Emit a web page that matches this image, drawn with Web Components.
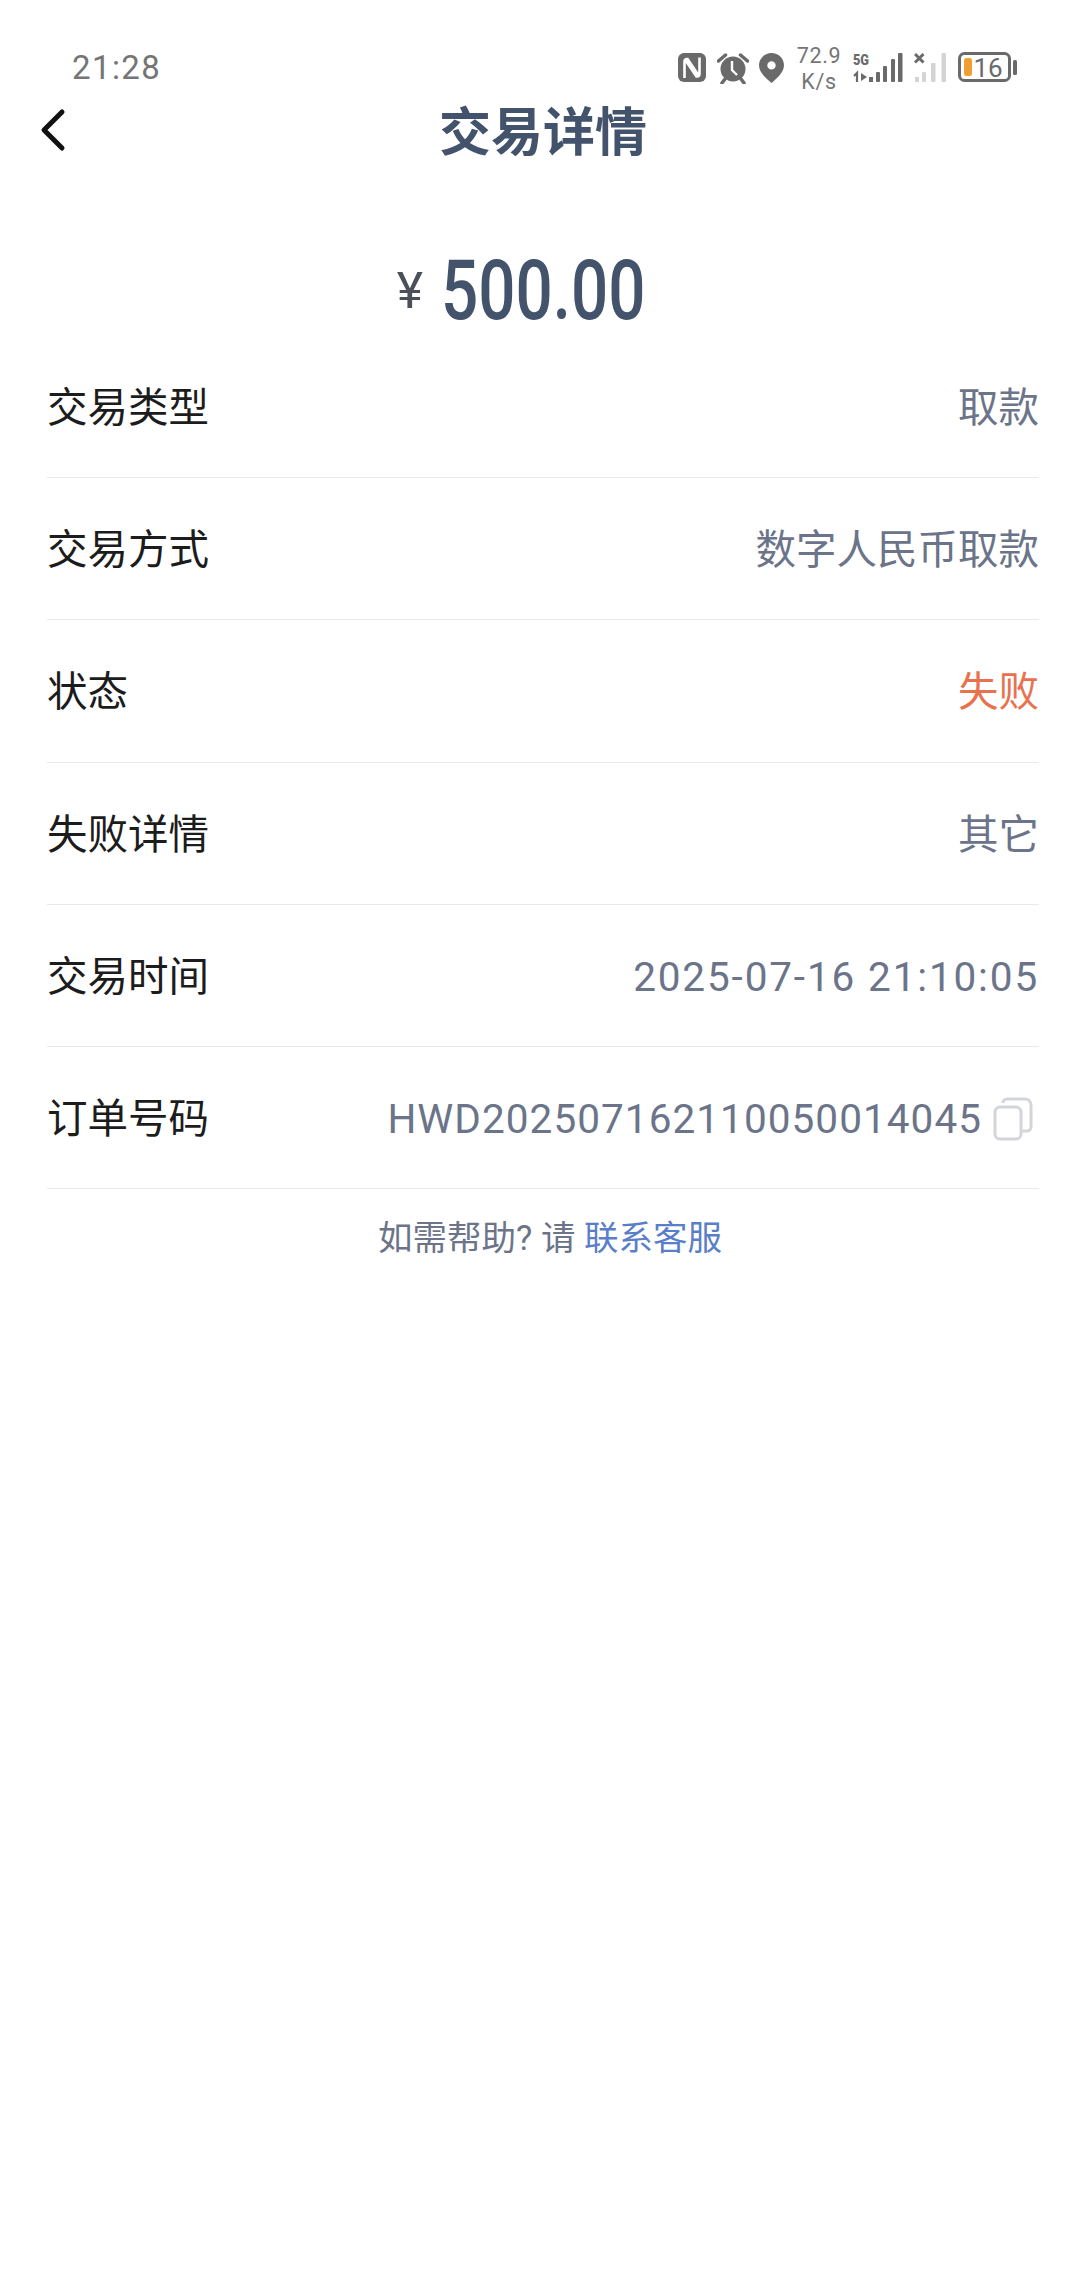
<!DOCTYPE html>
<html lang="zh-CN">
<head>
<meta charset="utf-8">
<title>交易详情</title>
<style>
  html, body { margin: 0; padding: 0; background: #fff; }
  body { font-family: Roboto, "Noto Sans CJK SC", sans-serif; width: 1086px; height: 2295px; overflow: hidden; }
</style>
</head>
<body>
<status-bar></status-bar>
<nav-header>交易详情</nav-header>
<amount-display>500.00</amount-display>
<detail-row label="交易类型">取款</detail-row>
<detail-row label="交易方式">数字人民币取款</detail-row>
<detail-row label="状态" tone="fail">失败</detail-row>
<detail-row label="失败详情">其它</detail-row>
<detail-row label="交易时间" style="--spacing: 1.85px">2025-07-16 21:10:05</detail-row>
<detail-row label="订单号码" style="--spacing: 1.05px" copy>HWD202507162110050014045</detail-row>
<help-line></help-line>

<script>
// Top system bar
class StatusBar extends HTMLElement {
    constructor() {
        super();
        this.attachShadow({ mode: 'open' });
        this.shadowRoot.innerHTML = `
            <style>
                :host {
                    display: flex;
                    justify-content: space-between;
                    height: 100px;
                    box-sizing: border-box;
                    padding: 44px 68px 0 72px;
                    color: #757575;
                }
                .time { font: 400 33px/48px Roboto, sans-serif; letter-spacing: 1.4px; }
                .icons { display: flex; align-items: flex-start; height: 48px; }
                svg { display: block; flex: none; }
                .speed {
                    width: 46px; margin: -1px 11px 0 12px;
                    font: 400 21.5px/26px Roboto, sans-serif;
                    text-align: center; letter-spacing: .6px;
                }
            </style>
            <span class="time">21:28</span>
            <div class="icons">
                <svg width="28" height="30" viewBox="0 0 28 30" style="margin-top:9px">
                    <rect width="28" height="29" rx="6" fill="#6a6a6a"/>
                    <path d="M6.500 25V8.500q0-3 3-2.500L21 23M21.500 4.500V21q0 3-3 2.500L7 6.500" fill="none" stroke="#fff" stroke-width="2.600"/>
                </svg>
                <svg width="32" height="31" viewBox="0 0 32 31" style="margin:9px 0 0 11px">
                    <circle cx="16" cy="16" r="12.500" fill="#6a6a6a"/>
                    <path d="M1.500 8l7-6M30.500 8l-7-6M8 26l-3 4M24 26l3 4" stroke="#6a6a6a" stroke-width="3.500" stroke-linecap="round"/>
                    <path d="M15 8v9l5 5" fill="none" stroke="#fff" stroke-width="2.400"/>
                </svg>
                <svg width="25" height="30" viewBox="0 0 25 30" style="margin:9px 0 0 10px">
                    <path fill-rule="evenodd" fill="#6a6a6a" d="M12.500 0C5.600 0 0 5.400 0 12.200c0 7.400 7.800 13.800 12.500 17.800C17.200 26 25 19.600 25 12.200 25 5.400 19.400 0 12.500 0zm0 8.200a4.200 4.200 0 1 1 0 8.400 4.200 4.200 0 0 1 0-8.400z"/>
                </svg>
                <div class="speed">72.9<br>K/s</div>
                <svg width="50" height="32" viewBox="0 0 50 32" style="margin-top:8px">
                    <text x="0" y="13" font-family="Roboto, sans-serif" font-weight="900" font-size="15" fill="#6a6a6a" textLength="16" lengthAdjust="spacingAndGlyphs">5G</text>
                    <path d="M1 24l3-3v9" fill="none" stroke="#6a6a6a" stroke-width="2.200"/>
                    <path d="M8 21v8l6-4z" fill="#6a6a6a"/>
                    <rect x="16" y="25" width="4" height="5" fill="#6a6a6a"/>
                    <rect x="23" y="20" width="4" height="10" rx="1" fill="#6a6a6a"/>
                    <rect x="30" y="14" width="4" height="16" rx="1" fill="#6a6a6a"/>
                    <rect x="38" y="7" width="4" height="23" rx="1" fill="#6a6a6a"/>
                    <rect x="45" y="1" width="4.500" height="29" rx="1" fill="#6a6a6a"/>
                </svg>
                <svg width="32" height="32" viewBox="0 0 32 32" style="margin:8px 0 0 11px">
                    <path d="M1 2l8.500 8.500M9.500 2L1 10.500" stroke="#6a6a6a" stroke-width="3"/>
                    <rect x="1" y="25" width="4" height="5" fill="#d4d4d4"/>
                    <rect x="8" y="20" width="4" height="10" rx="1" fill="#d4d4d4"/>
                    <rect x="17" y="11" width="4.500" height="19" rx="1" fill="#d4d4d4"/>
                    <rect x="27.500" y="1" width="4.500" height="29" rx="1" fill="#d4d4d4"/>
                </svg>
                <svg width="60" height="32" viewBox="0 0 60 32" style="margin:8px 0 0 12px">
                    <rect x="1.500" y="1.500" width="50" height="27" rx="5" fill="none" stroke="#6a6a6a" stroke-width="3"/>
                    <rect x="6" y="6" width="8" height="18" rx="2.500" fill="#f0a030"/>
                    <text x="15.500" y="24.500" font-family="Roboto, sans-serif" font-size="26" fill="#6a6a6a">16</text>
                    <rect x="55" y="8" width="4" height="15" rx="1.500" fill="#6a6a6a"/>
                </svg>
            </div>
        `;
    }
}

// Back arrow and centred page title
class NavHeader extends HTMLElement {
    constructor() {
        super();
        this.attachShadow({ mode: 'open' });
        this.shadowRoot.innerHTML = `
            <style>
                :host {
                    display: grid;
                    grid-template-columns: 100px 1fr 100px;
                    align-items: center;
                    height: 64px;
                    color: #43536b;
                    font: 700 52px/58px "Noto Sans CJK SC", sans-serif;
                }
                svg { display: block; margin: 0 0 4px 38px; }
                .title { text-align: center; padding-bottom: 6px; }
            </style>
            <svg width="30" height="44" viewBox="0 0 30 44">
                <path d="M24 4L6 22l18 18" fill="none" stroke="#111" stroke-width="5" stroke-linecap="round" stroke-linejoin="round"/>
            </svg>
            <div class="title"><slot></slot></div>
            <span></span>
        `;
    }
}

// Big amount line
class AmountDisplay extends HTMLElement {
    constructor() {
        super();
        this.attachShadow({ mode: 'open' });
        this.shadowRoot.innerHTML = `
            <style>
                :host {
                    display: flex;
                    justify-content: center;
                    align-items: center;
                    height: 172px;
                    box-sizing: border-box;
                    padding: 81px 49px 0 0;
                    color: #43536b;
                }
                .cur { font: 400 50px/60px Roboto, sans-serif; color: #4a4f58; margin-right: 18px; }
                .num {
                    display: block;
                    width: 199px;
                    font: 500 84px/84px Roboto, sans-serif;
                    white-space: nowrap;
                }
                .num span { display: inline-block; transform: scaleX(.78); transform-origin: 0 50%; }
            </style>
            <span class="cur">¥</span>
            <div class="num"><span><slot></slot></span></div>
        `;
    }
}

// One label / value row with a bottom divider
class DetailRow extends HTMLElement {
    constructor() {
        super();
        this.attachShadow({ mode: 'open' });
        this.shadowRoot.innerHTML = `
            <style>
                :host {
                    display: flex;
                    justify-content: space-between;
                    align-items: center;
                    height: 142.2px;
                    box-sizing: border-box;
                    margin: 0 47px;
                    padding-top: 3px;
                    border-bottom: 1px solid #e9e9eb;
                    font: 400 40.5px/50px Roboto, "Noto Sans CJK SC", sans-serif;
                }
                .label { color: #1c1c1c; }
                .value { display: flex; align-items: center; color: #6b7489; letter-spacing: var(--spacing, 0); }
                :host([tone="fail"]) .value { color: #e8724e; }
                svg { display: none; margin: 0 6px 0 11px; flex: none; }
                :host([copy]) svg { display: block; }
            </style>
            <span class="label"></span>
            <span class="value">
                <slot></slot>
                <svg width="40" height="44" viewBox="0 0 40 44" fill="none" stroke="#d3d5da" stroke-width="3">
                    <rect x="2" y="10" width="26" height="32" rx="5"/>
                    <path d="M10 6a4 4 0 0 1 4-4h18a6 6 0 0 1 6 6v22a4 4 0 0 1-4 4h-6"/>
                </svg>
            </span>
        `;
        this.shadowRoot.querySelector('.label').textContent = this.getAttribute('label');
    }
}

// Customer service hint
class HelpLine extends HTMLElement {
    constructor() {
        super();
        this.attachShadow({ mode: 'open' });
        this.shadowRoot.innerHTML = `
            <style>
                :host {
                    display: block;
                    padding: 25px 0 0 14px;
                    text-align: center;
                    color: #6b7489;
                    font: 400 34.5px/48px Roboto, "Noto Sans CJK SC", sans-serif;
                }
                a { color: #5b7ec8; text-decoration: none; }
            </style>
            如需帮助? 请 <a>联系客服</a>
        `;
    }
}

customElements.define('status-bar', StatusBar);
customElements.define('nav-header', NavHeader);
customElements.define('amount-display', AmountDisplay);
customElements.define('detail-row', DetailRow);
customElements.define('help-line', HelpLine);
</script>
</body>
</html>
